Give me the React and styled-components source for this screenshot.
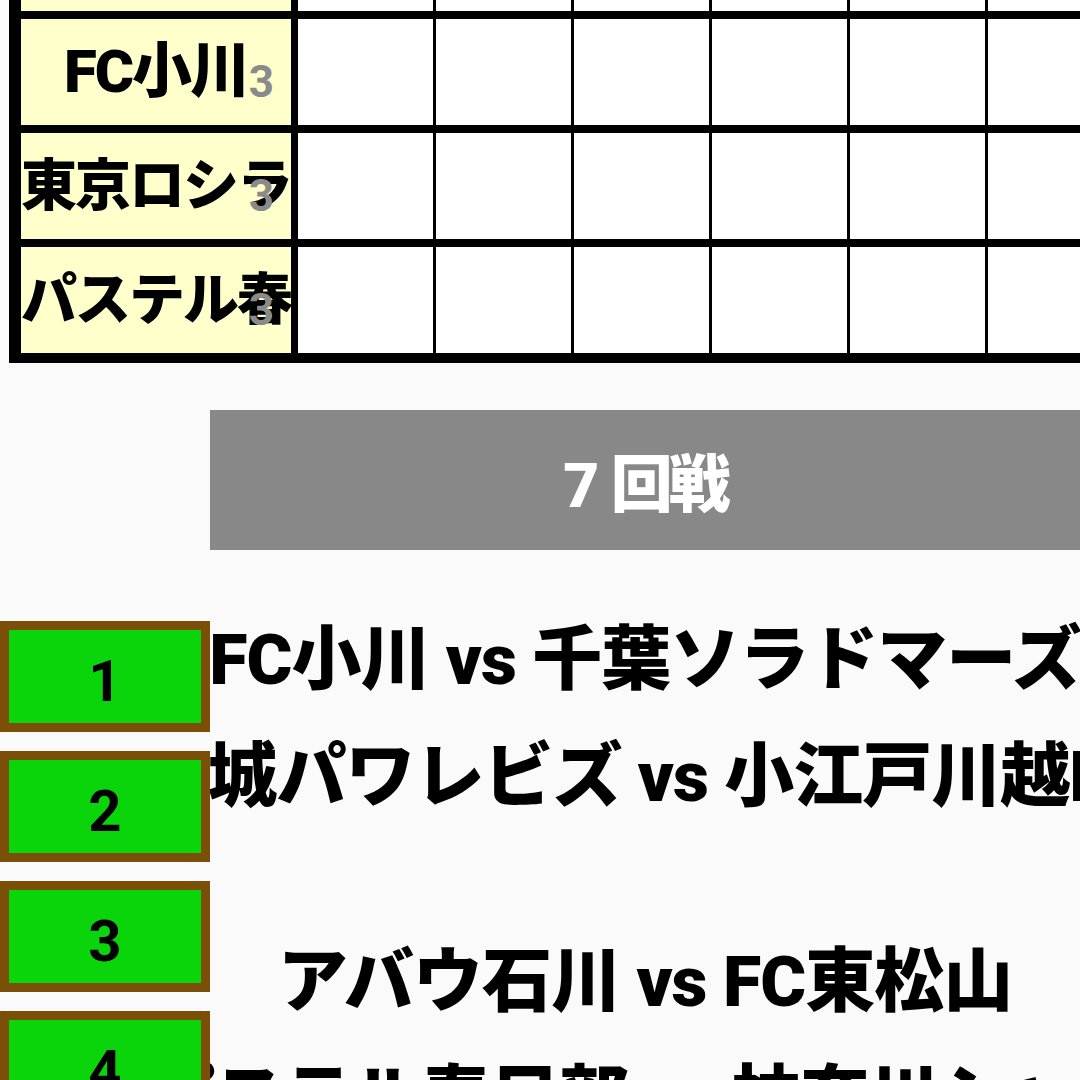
import styled, { createGlobalStyle } from "styled-components";

const GlobalStyle = createGlobalStyle`
    body {
        margin: 0;
        background-color: #fafafa;
        font-family: Roboto, "Noto Sans CJK JP", sans-serif;
        overflow: hidden;
    }
`;

const Page = styled.div`
    width: 1080px;
    height: 1080px;
    overflow: hidden;
`;

const Table = styled.div`
    margin-left: 9px;
    width: max-content;
    border-left: 12px solid #000;
    border-bottom: 10px solid #000;
`;

const Row = styled.div`
    display: flex;
    height: ${(p) => p.$height}px;
    border-top: ${(p) => (p.$stub ? 0 : 8)}px solid #000;
`;

const NameCell = styled.div`
    position: relative;
    width: 270px;
    border-right: 7px solid #000;
    background-color: #ffffcc;
    overflow: hidden;
    white-space: nowrap;
    text-align: center;
    font-weight: 900;
    font-size: ${(p) => p.$size}px;
    letter-spacing: -2px;
    line-height: ${(p) => p.$line}px;
    color: #000;
`;

const Count = styled.span`
    position: absolute;
    right: 17px;
    bottom: 21px;
    font-size: 44px;
    font-weight: bold;
    line-height: 1;
    letter-spacing: 0;
    color: #8a8a8a;
`;

const Cell = styled.div`
    width: 135px;
    flex-shrink: 0;
    border-right: 3px solid #000;
    background-color: #fff;
`;

const Lower = styled.div`
    display: grid;
    grid-template-columns: 210px 870px;
    margin-top: 47px;
`;

const RoundBar = styled.div`
    grid-column: 2;
    height: 140px;
    display: flex;
    align-items: center;
    justify-content: center;
    background-color: #888888;
    color: #fff;
    font-weight: 900;
    font-size: 62px;
    letter-spacing: -4px;
    word-spacing: 4px;
`;

const NumberColumn = styled.div`
    display: flex;
    flex-direction: column;
    gap: 19px;
    padding-top: 71px;
`;

const NumberBox = styled.div`
    box-sizing: border-box;
    width: 210px;
    height: 111px;
    display: flex;
    align-items: center;
    justify-content: center;
    border: 9px solid #7b4f08;
    background-color: #0ad40a;
    font-weight: bold;
    font-size: 58px;
    padding-top: 8px;
    color: #000;
`;

const MatchColumn = styled.div`
    display: flex;
    flex-direction: column;
    padding-top: 45px;
    overflow: hidden;
`;

const MatchLine = styled.div`
    height: 117px;
    margin-top: ${(p) => p.$gap || 0}px;
    display: flex;
    align-items: center;
    justify-content: center;
    white-space: nowrap;
    font-weight: 900;
    font-size: 70px;
    letter-spacing: -1px;
    color: #000;
`;

const teams = [
    { name: "", size: 60, height: 11, stub: true },
    { name: "FC小川", size: 60, height: 106 },
    { name: "東京ロシラフ", size: 56, height: 106 },
    { name: "パステル春日部", size: 56, height: 106 },
];

const matches = [
    { text: "FC小川 vs 千葉ソラドマーズ" },
    { text: "茨城パワレビズ vs 小江戸川越FC" },
    { text: "アバウ石川 vs FC東松山", gap: 88 },
    { text: "パステル春日部 vs 神奈川シャチ" },
];

function App() {
    return (
        <Page>
            <GlobalStyle />
            <Table>
                {teams.map((t, i) => (
                    <Row key={i} $height={t.height} $stub={t.stub}>
                        <NameCell $size={t.size} $line={t.height}>
                            {t.name}
                            {!t.stub && <Count>3</Count>}
                        </NameCell>
                        {[0, 1, 2, 3, 4, 5, 6].map((c) => (
                            <Cell key={c} />
                        ))}
                    </Row>
                ))}
            </Table>
            <Lower>
                <RoundBar>7 回戦</RoundBar>
                <NumberColumn>
                    {[1, 2, 3, 4].map((n) => (
                        <NumberBox key={n}>{n}</NumberBox>
                    ))}
                </NumberColumn>
                <MatchColumn>
                    {matches.map((m, i) => (
                        <MatchLine key={i} $gap={m.gap}>
                            {m.text}
                        </MatchLine>
                    ))}
                </MatchColumn>
            </Lower>
        </Page>
    );
}

export default App;
